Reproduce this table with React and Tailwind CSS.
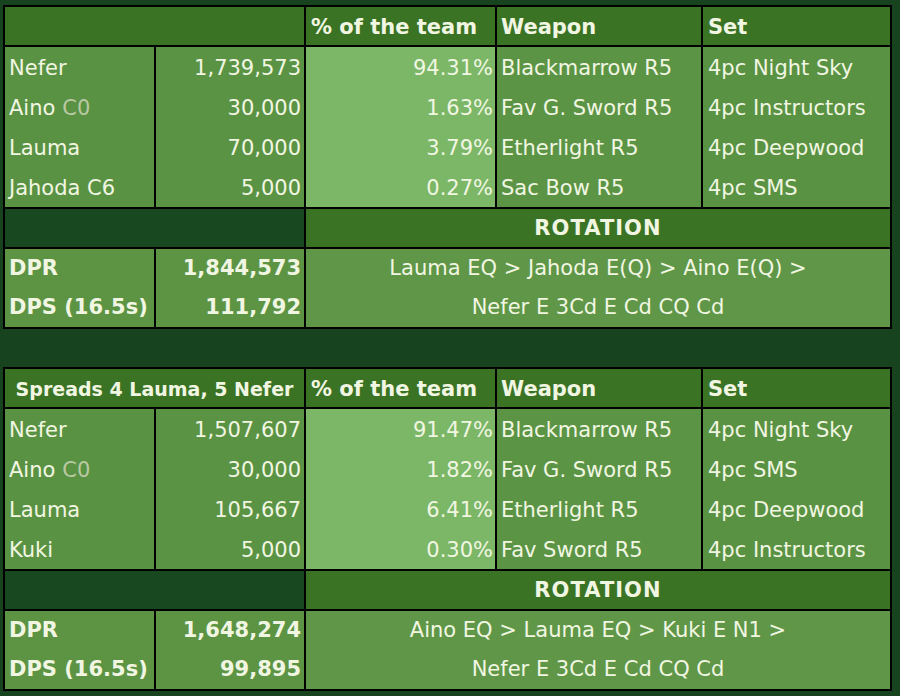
import React from "react";

const tables = [
  {
    title: "",
    rows: [
      { name: "Nefer", dmg: "1,739,573", pct: "94.31%", weapon: "Blackmarrow R5", set: "4pc Night Sky" },
      { name: "Aino", cons: "C0", dmg: "30,000", pct: "1.63%", weapon: "Fav G. Sword R5", set: "4pc Instructors" },
      { name: "Lauma", dmg: "70,000", pct: "3.79%", weapon: "Etherlight R5", set: "4pc Deepwood" },
      { name: "Jahoda C6", dmg: "5,000", pct: "0.27%", weapon: "Sac Bow R5", set: "4pc SMS" },
    ],
    dpr: "1,844,573",
    dps: "111,792",
    rotation: ["Lauma EQ > Jahoda E(Q) > Aino E(Q) >", "Nefer E 3Cd E Cd CQ Cd"],
  },
  {
    title: "Spreads 4 Lauma, 5 Nefer",
    rows: [
      { name: "Nefer", dmg: "1,507,607", pct: "91.47%", weapon: "Blackmarrow R5", set: "4pc Night Sky" },
      { name: "Aino", cons: "C0", dmg: "30,000", pct: "1.82%", weapon: "Fav G. Sword R5", set: "4pc SMS" },
      { name: "Lauma", dmg: "105,667", pct: "6.41%", weapon: "Etherlight R5", set: "4pc Deepwood" },
      { name: "Kuki", dmg: "5,000", pct: "0.30%", weapon: "Fav Sword R5", set: "4pc Instructors" },
    ],
    dpr: "1,648,274",
    dps: "99,895",
    rotation: ["Aino EQ > Lauma EQ > Kuki E N1 >", "Nefer E 3Cd E Cd CQ Cd"],
  },
];

const Line = ({ children, className = "h-10 pt-[4px]" }) => (
  <div className={"flex items-center whitespace-nowrap " + className}>{children}</div>
);

const DpsTable = ({ data }) => {
  return (
    <div className="ml-[3px] w-[889px] grid grid-cols-[149px_148px_189px_204px_187px] gap-[2px] p-[2px] bg-black">
      {/* header */}
      <div className="col-span-2 h-[38px] pt-[3px] bg-[#3a7324] flex items-center justify-center font-bold text-[19px]">
        {data.title}
      </div>
      <div className="h-[38px] pt-[3px] bg-[#3a7324] flex items-center pl-[5px] font-bold">% of the team</div>
      <div className="h-[38px] pt-[3px] bg-[#3a7324] flex items-center pl-[4px] font-bold">Weapon</div>
      <div className="h-[38px] pt-[3px] bg-[#3a7324] flex items-center pl-[5px] font-bold">Set</div>

      {/* body */}
      <div className="bg-[#5a9243] pl-[4px]">
        {data.rows.map((r) => (
          <Line key={r.name}>
            {r.name}
            {r.cons && <span className="ml-[7px] text-[#b9c9a3]">{r.cons}</span>}
          </Line>
        ))}
      </div>
      <div className="bg-[#5b9344] pr-[3px]">
        {data.rows.map((r) => (
          <Line key={r.name} className="h-10 pt-[4px] justify-end">{r.dmg}</Line>
        ))}
      </div>
      <div className="bg-[#7bb766] pr-[2px]">
        {data.rows.map((r) => (
          <Line key={r.name} className="h-10 pt-[4px] justify-end">{r.pct}</Line>
        ))}
      </div>
      <div className="bg-[#5c9445] pl-[4px]">
        {data.rows.map((r) => (
          <Line key={r.name}>{r.weapon}</Line>
        ))}
      </div>
      <div className="bg-[#5a9243] pl-[5px]">
        {data.rows.map((r) => (
          <Line key={r.name}>{r.set}</Line>
        ))}
      </div>

      {/* rotation header */}
      <div className="col-span-2 h-[38px] bg-[#17481f]" />
      <div className="col-span-3 h-[38px] pt-[2px] bg-[#3a7324] flex items-center justify-center font-bold tracking-wider">
        ROTATION
      </div>

      {/* totals */}
      <div className="bg-[#5c9444] pl-[4px] font-bold">
        <Line className="h-[39px] pt-[1px]">DPR</Line>
        <Line className="h-[39px] pt-[1px]">DPS (16.5s)</Line>
      </div>
      <div className="bg-[#5c9444] pr-[3px] font-bold">
        <Line className="h-[39px] pt-[1px] justify-end">{data.dpr}</Line>
        <Line className="h-[39px] pt-[1px] justify-end">{data.dps}</Line>
      </div>
      <div className="col-span-3 bg-[#5f9647] flex flex-col items-center">
        {data.rotation.map((t) => (
          <Line key={t} className="h-[39px] pt-[1px]">{t}</Line>
        ))}
      </div>
    </div>
  );
};

export default function App() {
  return (
    <div className="w-[900px] h-[696px] bg-[#17441e] pt-[5px] text-[#f1f6e2] text-[21px] font-['DejaVu_Sans',sans-serif] overflow-hidden">
      <div className="flex flex-col gap-[38px]">
        {tables.map((t, i) => (
          <DpsTable key={i} data={t} />
        ))}
      </div>
    </div>
  );
}
